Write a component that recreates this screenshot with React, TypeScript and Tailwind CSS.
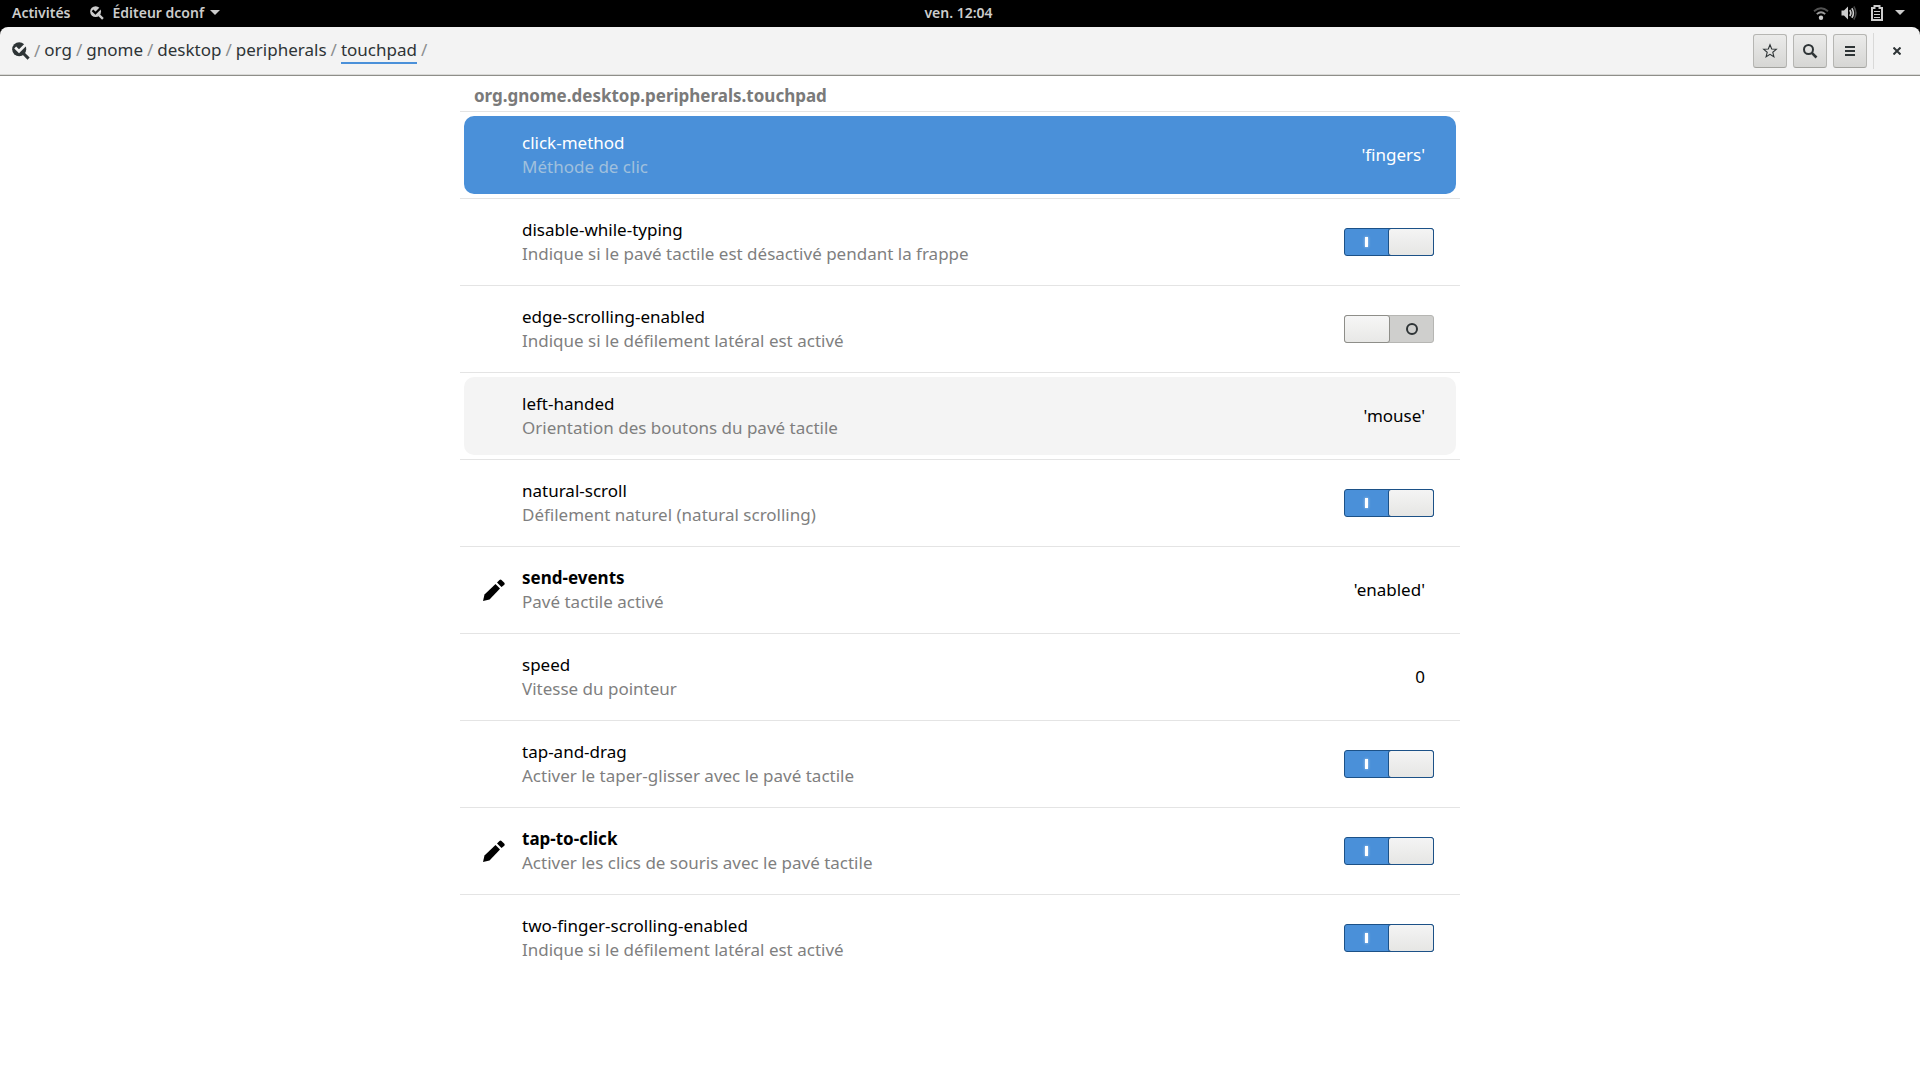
type Setting = {
  name: string;
  summary: string;
  value: string | boolean;
  modified?: boolean;
  state?: "selected" | "hover";
};

const path = ["org", "gnome", "desktop", "peripherals", "touchpad"];

const settings: Setting[] = [
  { name: "click-method", summary: "Méthode de clic", value: "'fingers'", state: "selected" },
  {
    name: "disable-while-typing",
    summary: "Indique si le pavé tactile est désactivé pendant la frappe",
    value: true,
  },
  {
    name: "edge-scrolling-enabled",
    summary: "Indique si le défilement latéral est activé",
    value: false,
  },
  {
    name: "left-handed",
    summary: "Orientation des boutons du pavé tactile",
    value: "'mouse'",
    state: "hover",
  },
  { name: "natural-scroll", summary: "Défilement naturel (natural scrolling)", value: true },
  { name: "send-events", summary: "Pavé tactile activé", value: "'enabled'", modified: true },
  { name: "speed", summary: "Vitesse du pointeur", value: "0" },
  { name: "tap-and-drag", summary: "Activer le taper-glisser avec le pavé tactile", value: true },
  {
    name: "tap-to-click",
    summary: "Activer les clics de souris avec le pavé tactile",
    value: true,
    modified: true,
  },
  {
    name: "two-finger-scrolling-enabled",
    summary: "Indique si le défilement latéral est activé",
    value: true,
  },
];

function DconfIcon({ className }: { className: string }) {
  return (
    <svg viewBox="0 0 18 18" className={className} aria-hidden="true">
      <mask id="dconf-check">
        <rect width="18" height="18" fill="white" />
        <path d="M3.2 5.6 L7 9.2 L14.5 1.8" fill="none" stroke="black" strokeWidth="2.8" />
      </mask>
      <circle cx="7.2" cy="7.2" r="7" fill="currentColor" mask="url(#dconf-check)" />
      <path d="M11 11 L16.6 16.600" stroke="currentColor" strokeWidth="3" />
    </svg>
  );
}

function PencilIcon() {
  return (
    <svg viewBox="0 0 24 24" className="size-6" aria-hidden="true">
      <path d="M1 23 L2.5 16.5 L13.5 6 L18 10.5 L7.5 21.5 Z" />
      <path d="M15 4.5 L17.5 2 Q18.5 1 19.5 2 L22.3 4.8 Q23.2 5.8 22.3 6.7 L19.5 9 Z" />
    </svg>
  );
}

function CaretIcon() {
  return (
    <svg viewBox="0 0 10 5" className="h-[5px] w-2.5" aria-hidden="true">
      <path d="M0 0 H10 L5 5 Z" fill="currentColor" />
    </svg>
  );
}

function TopBar() {
  return (
    <div className="grid h-[27px] grid-cols-3 items-center bg-black pr-[15px] pb-0.5 pl-3 text-sm font-semibold text-[#cccccc]">
      <div className="flex items-center gap-5">
        <button>Activités</button>
        <button className="flex items-center gap-2">
          <DconfIcon className="size-3.5" />
          <span className="flex items-center gap-1.5">
            Éditeur dconf
            <CaretIcon />
          </span>
        </button>
      </div>
      <button className="justify-self-center">ven. 12:04</button>
      <button className="flex items-center gap-3 justify-self-end" aria-label="Système">
        <svg viewBox="0 0 16 16" className="size-4" aria-hidden="true">
          <g fill="none" stroke="currentColor" strokeWidth="1.8">
            <path d="M1 6.2 Q8 0.200 15 6.200" opacity="0.4" />
            <path d="M3.800 9.200 Q8 5.200 12.200 9.200" opacity="0.75" />
          </g>
          <circle cx="8" cy="12.8" r="2.2" fill="currentColor" />
        </svg>
        <svg viewBox="0 0 18 16" className="h-4 w-[18px]" aria-hidden="true">
          <path d="M0.500 5.500 H3 L7 1.500 V14.500 L3 10.500 H0.500 Z" fill="currentColor" />
          <g fill="none" stroke="currentColor" strokeWidth="1.6">
            <path d="M8.8 5 Q11 8 8.800 11" />
            <path d="M10.8 3.200 Q14 8 10.800 12.800" />
            <path d="M12.8 1.500 Q17 8 12.800 14.500" opacity="0.35" />
          </g>
        </svg>
        <svg viewBox="0 0 12 16" className="h-4 w-3" aria-hidden="true">
          <path
            d="M1 3 H3.500 V1 H8.500 V3 H11 V15 H1 Z"
            fill="none"
            stroke="currentColor"
            strokeWidth="2"
          />
          <path d="M3 6.500 H9 M3 9.500 H9 M3 12.500 H9" stroke="currentColor" />
        </svg>
        <CaretIcon />
      </button>
    </div>
  );
}

const headerButton =
  "flex size-[34px] items-center justify-center rounded-[3px] border border-[#b6b6b3] border-b-[#a3a39f] bg-linear-to-b from-[#ebebea] to-[#d6d6d4]";

function HeaderBar() {
  return (
    <div className="bg-black">
      <header className="flex items-center justify-between rounded-t-lg border-b border-[#8e8e89] bg-[#f3f3f3] py-1.5 pr-1.5 pl-3 text-[#2e3436] shadow-[inset_0_-1px_#d9d9d7]">
        <nav className="flex items-center text-[17px] leading-6">
          <DconfIcon className="size-[18px]" />
          <span className="px-1 text-[#8b8e8f]">/</span>
          {path.map((part) => (
            <span key={part} className="flex">
              <a
                href={"#" + part}
                className={part === "touchpad" ? "border-b-2 border-[#4a90d9]" : "border-b-2 border-transparent"}
              >
                {part}
              </a>
              <span className="px-1 text-[#8b8e8f]">/</span>
            </span>
          ))}
        </nav>
        <div className="flex items-center gap-1.5">
          <button className={headerButton} aria-label="Signets">
            <svg viewBox="0 0 16 16" className="size-4" aria-hidden="true">
              <path
                d="M8 1.800 L9.700 6 L14.300 6.300 L10.800 9.300 L11.900 13.800 L8 11.300 L4.100 13.800 L5.200 9.300 L1.700 6.300 L6.300 6 Z"
                fill="none"
                stroke="currentColor"
                strokeWidth="1.100"
              />
            </svg>
          </button>
          <button className={headerButton} aria-label="Rechercher">
            <svg viewBox="0 0 16 16" className="size-4" aria-hidden="true">
              <circle cx="6.500" cy="6.500" r="4.500" fill="none" stroke="currentColor" strokeWidth="2" />
              <path d="M9.800 9.800 L14.500 14.500" stroke="currentColor" strokeWidth="2.600" />
            </svg>
          </button>
          <button className={headerButton} aria-label="Menu">
            <svg viewBox="0 0 10 10" className="size-2.5" aria-hidden="true">
              <path d="M0 0 H10 V2 H0 Z M0 4 H10 V6 H0 Z M0 8 H10 V10 H0 Z" fill="currentColor" />
            </svg>
          </button>
          <div className="h-9 w-px bg-[#d9d9d8]" />
          <button className="flex size-[34px] items-center justify-center" aria-label="Fermer">
            <svg viewBox="0 0 8 8" className="size-2" aria-hidden="true">
              <path d="M0.500 0.500 L7.500 7.500 M7.500 0.500 L0.500 7.500" stroke="currentColor" strokeWidth="2" />
            </svg>
          </button>
        </div>
      </header>
    </div>
  );
}

function Toggle({ name, on }: { name: string; on: boolean }) {
  return (
    <label className="relative mr-[22px] flex cursor-pointer">
      <input type="checkbox" role="switch" aria-label={name} defaultChecked={on} className="peer sr-only" />
      <span className="flex h-7 w-[90px] rounded-[3px] border border-[#b6b6b3] bg-[#cfcfcd] peer-checked:border-[#1c5187] peer-checked:bg-[#4a90d9]">
        {on && (
          <span className="flex flex-1 items-center justify-center">
            <span className="h-2.5 w-[3px] bg-white shadow-[0_0_3px_#ffffff99]" />
          </span>
        )}
        <span
          className={
            on
              ? "-my-px -mr-px w-[46px] rounded-[3px] border border-[#1c5187] bg-linear-to-b from-[#f4f4f4] to-[#e6e6e4]"
              : "-my-px -ml-px w-[46px] rounded-[3px] border border-[#8e8e89] bg-linear-to-b from-[#f6f6f6] to-[#e8e8e6]"
          }
        />
        {!on && (
          <span className="flex flex-1 items-center justify-center">
            <span className="size-3 rounded-full border-2 border-[#2e3436]" />
          </span>
        )}
      </span>
    </label>
  );
}

const rowColors = {
  selected: "bg-[#4a90d9] text-white",
  hover: "bg-[#f4f4f4] text-black",
  normal: "text-black",
};

function SettingRow({ setting }: { setting: Setting }) {
  const { name, summary, value, modified, state } = setting;
  return (
    <li className="border-t border-[#e4e4e4] p-1">
      <div className={"flex h-[78px] items-center rounded-[10px] " + rowColors[state ?? "normal"]}>
        <div className="flex w-[58px] pl-[18px]">{modified && <PencilIcon />}</div>
        <div className="flex-1 leading-6">
          <div className={modified ? "font-bold" : ""}>{name}</div>
          <div className={state === "selected" ? "text-[#a0c0dd]" : "text-[#7f7f7f]"}>{summary}</div>
        </div>
        {typeof value === "boolean" ? (
          <Toggle name={name} on={value} />
        ) : (
          <span className="mr-[31px]">{value}</span>
        )}
      </div>
    </li>
  );
}

export default function App() {
  return (
    <div className="min-h-screen bg-white font-['Noto_Sans',sans-serif]">
      <TopBar />
      <HeaderBar />
      <main className="mx-auto max-w-[1000px] text-[17px]">
        <h1 className="px-3.5 pt-2 pb-[3px] leading-6 font-bold text-[#7a7a7a]">
          org.gnome.desktop.peripherals.touchpad
        </h1>
        <ul>
          {settings.map((setting) => (
            <SettingRow key={setting.name} setting={setting} />
          ))}
        </ul>
      </main>
    </div>
  );
}
